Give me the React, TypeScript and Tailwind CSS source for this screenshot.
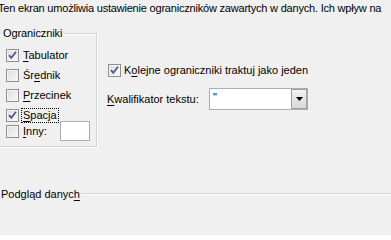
import React from "react";

function Check({ checked }: { checked?: boolean }) {
  return (
    <span className="relative inline-flex w-[13px] h-[13px] shrink-0 border border-[#8e8f8f] bg-gradient-to-br from-[#dcdcdc] to-[#fbfbfb] shadow-[inset_0_0_0_1px_#f4f4f4]">
      {checked && (
        <svg viewBox="0 0 11 11" className="absolute left-0 top-0 w-[11px] h-[11px]">
          <path d="M2 5.2 L4.3 7.8 L9 1.8" fill="none" stroke="#4a5c8f" strokeWidth="1.8" />
        </svg>
      )}
    </span>
  );
}

function Row({ checked, pre, u, post, focus }: { checked?: boolean; pre: string; u: string; post: string; focus?: boolean }) {
  return (
    <div className="flex items-center h-[20px] gap-[3px]">
      <Check checked={checked} />
      <span className={focus ? "outline outline-1 outline-dotted outline-black px-[1px] leading-[13px]" : "leading-[13px] pl-[1px]"}>
        {pre}
        <span className="underline underline-offset-[2px]">{u}</span>
        {post}
      </span>
    </div>
  );
}

export default function App() {
  return (
    <div
      className="w-[391px] h-[235px] bg-[#f0f0f0] overflow-hidden text-[11px] text-black"
      style={{ fontFamily: '"Liberation Sans", Arial, sans-serif' }}
    >
      <div className="ml-[-2px] mt-[1px] whitespace-nowrap leading-[15px] tracking-[-0.2px]">
        Ten ekran umożliwia ustawienie ograniczników zawartych w danych. Ich wpływ na
      </div>
      <div className="flex mt-[10px]">
        <fieldset className="ml-[-8px] w-[105px] h-[121px] shrink-0 border border-[#d3d3d3] shadow-[1px_1px_0_#fff,inset_1px_1px_0_#fff] p-0">
          <legend className="ml-[8px] px-[2px] leading-[14px] tracking-[-0.1px]">Ograniczniki</legend>
          <div className="pl-[13px] pt-[5px]">
            <Row checked pre="" u="T" post="abulator" />
            <Row pre="Śr" u="e" post="dnik" />
            <Row pre="" u="P" post="rzecinek" />
            <Row checked pre="" u="S" post="pacja" focus />
            <div className="flex items-start h-[22px] gap-[3px]">
              <Check />
              <span className="leading-[13px] pl-[1px]">
                <span className="underline underline-offset-[2px]">I</span>nny:
              </span>
              <span className="ml-[10px] mt-[-4px] w-[30px] h-[20px] bg-white border border-[#abadb3]" />
            </div>
          </div>
        </fieldset>
        <div className="ml-[11px] pt-[38px]">
          <div className="flex items-center gap-[3px]">
            <Check checked />
            <span className="leading-[13px]">
              K<span className="underline underline-offset-[2px]">o</span>lejne ograniczniki traktuj jako jeden
            </span>
          </div>
          <div className="flex items-center mt-[11px] ml-[-1px]">
            <span className="w-[102px] shrink-0 whitespace-nowrap">
              <span className="underline underline-offset-[2px]">K</span>walifikator tekstu:
            </span>
            <div className="flex w-[99px] h-[22px] shrink-0 bg-white border border-[#abadb3] items-center">
              <span className="flex-1 pl-[3px] leading-[14px] self-start pt-[1px]">"</span>
              <span className="w-[16px] h-[20px] border border-[#a0a0a0] bg-gradient-to-b from-[#f2f2f2] to-[#d8d8d8] flex items-center justify-center">
                <svg viewBox="0 0 7 4" className="w-[7px] h-[4px]">
                  <path d="M0 0 H7 L3.5 4 Z" fill="#000" />
                </svg>
              </span>
            </div>
          </div>
        </div>
      </div>
      <div className="flex items-center mt-[40px]">
        <span className="ml-[1px] leading-[14px] whitespace-nowrap">
          Podgląd danyc<span className="underline underline-offset-[2px]">h</span>
        </span>
        <span className="flex-1 h-[2px] border-t border-[#d3d3d3] border-b border-b-white ml-[1px]" />
      </div>
    </div>
  );
}
